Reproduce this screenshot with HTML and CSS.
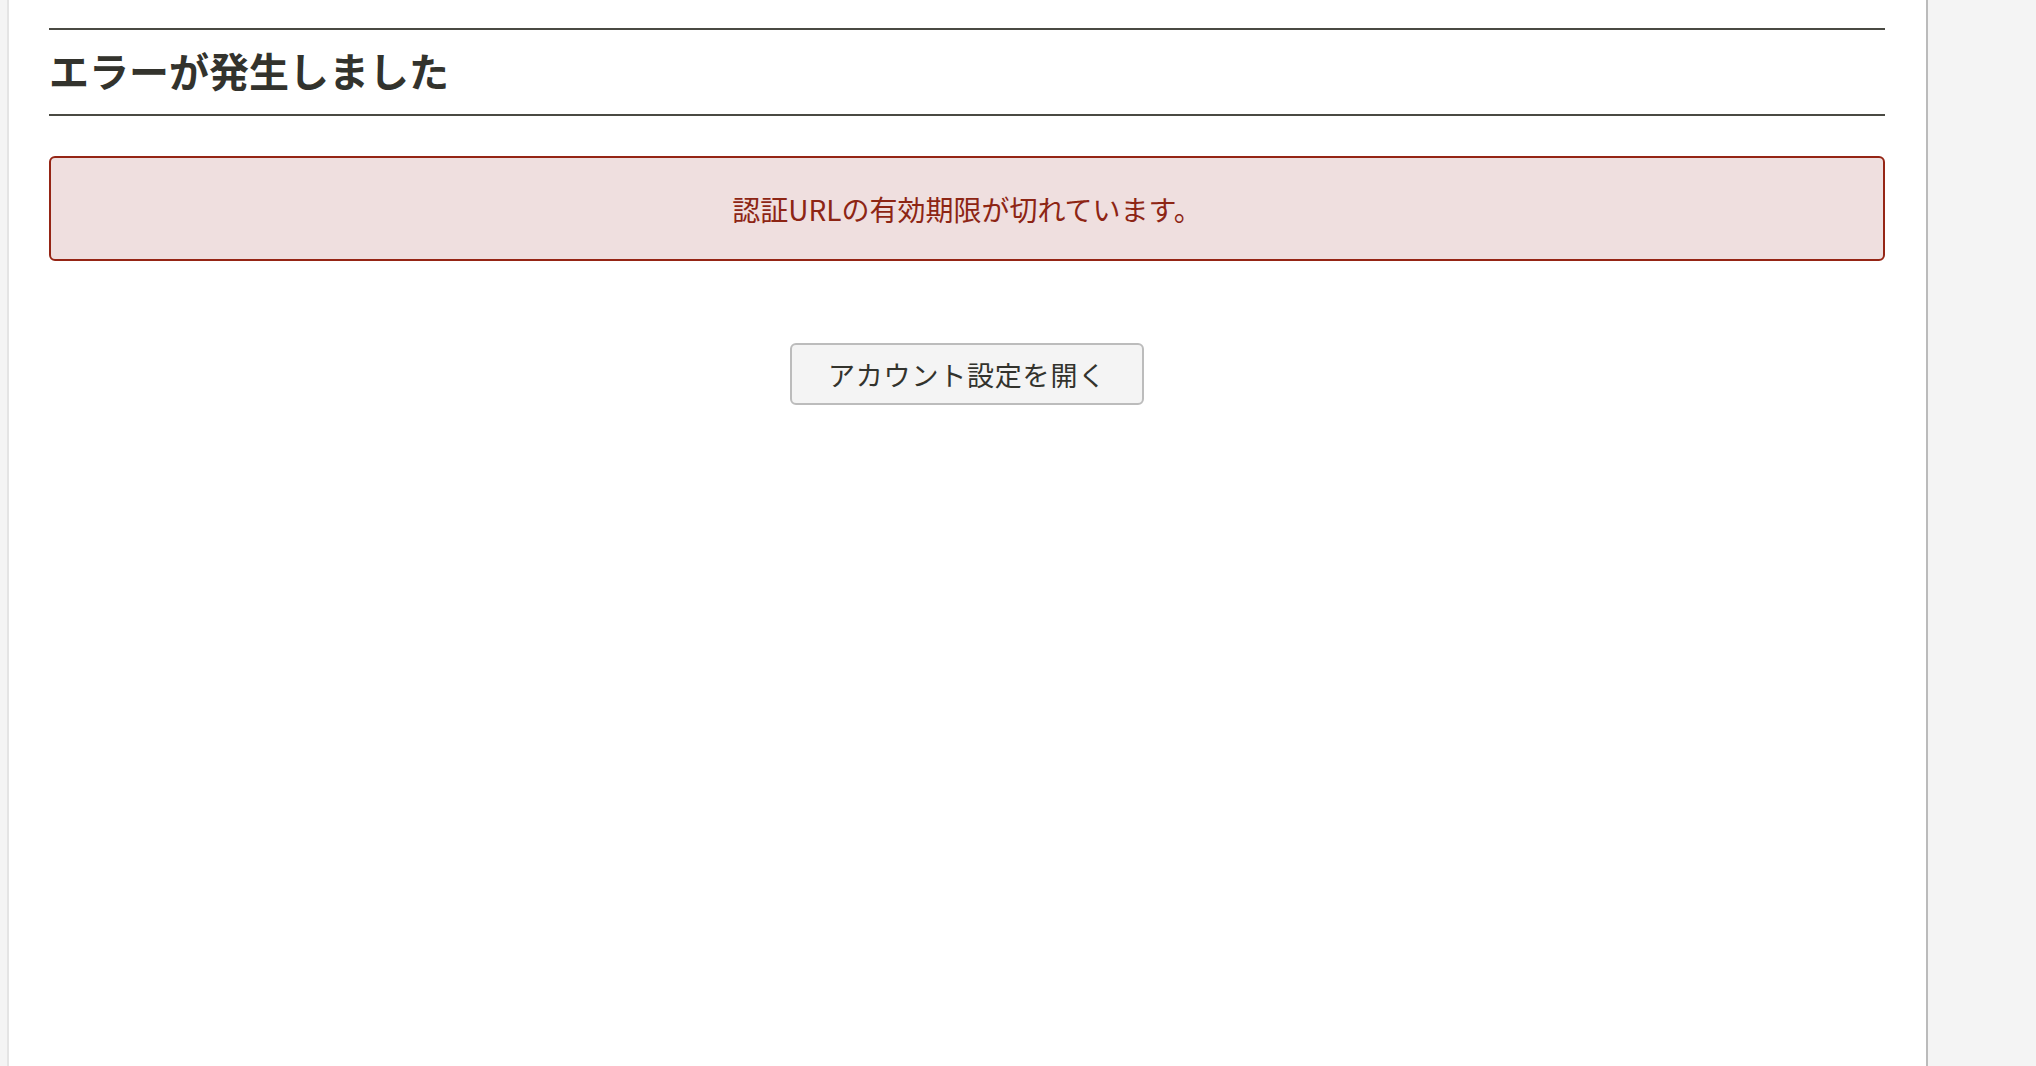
FILE: index.html
```html
<!DOCTYPE html>
<html lang="ja">
<head>
<meta charset="utf-8">
<title>エラーが発生しました</title>
<link rel="stylesheet" href="styles.css">
</head>
<body>
<div class="page">
  <main class="panel">
    <h1 class="title">エラーが発生しました</h1>
    <div class="alert">認証URLの有効期限が切れています。</div>
    <div class="actions">
      <button class="btn" type="button">アカウント設定を開く</button>
    </div>
  </main>
</div>
</body>
</html>
```

FILE: styles.css
```css
html, body {
  margin: 0;
  padding: 0;
  height: 100%;
}
body {
  background: #f4f4f4;
  font-family: "Noto Sans CJK JP", "Noto Sans", sans-serif;
  color: #33332d;
}
.page {
  height: 100%;
  display: flex;
  padding-left: 7px;
  box-sizing: border-box;
}
.panel {
  width: 1921px;
  box-sizing: border-box;
  background: #ffffff;
  border-left: 2px solid #e4e4e4;
  border-right: 2px solid #bbbbbb;
  padding: 28px 41px 0 40px;
  min-height: 100%;
}
.title {
  margin: 0;
  border-top: 2px solid #4a4a43;
  border-bottom: 2px solid #4a4a43;
  font-size: 40px;
  font-weight: 700;
  line-height: 80px;
  height: 84px;
  box-sizing: content-box;
  padding-bottom: 0;
  color: #33332d;
}
.alert {
  margin-top: 40px;
  height: 105px;
  box-sizing: border-box;
  border: 2px solid #952515;
  border-radius: 6px;
  background: #efdfdf;
  color: #8d2514;
  font-size: 28px;
  display: flex;
  align-items: center;
  justify-content: center;
}
.actions {
  display: flex;
  justify-content: center;
  margin-top: 82px;
}
.btn {
  width: 354px;
  height: 62px;
  box-sizing: border-box;
  background: #f4f4f4;
  border: 2px solid #bcbcbc;
  border-radius: 6px;
  font-family: "Noto Sans CJK JP", "Noto Sans", sans-serif;
  font-size: 27px;
  letter-spacing: 0.8px;
  color: #33332d;
  padding: 0;
}
```
